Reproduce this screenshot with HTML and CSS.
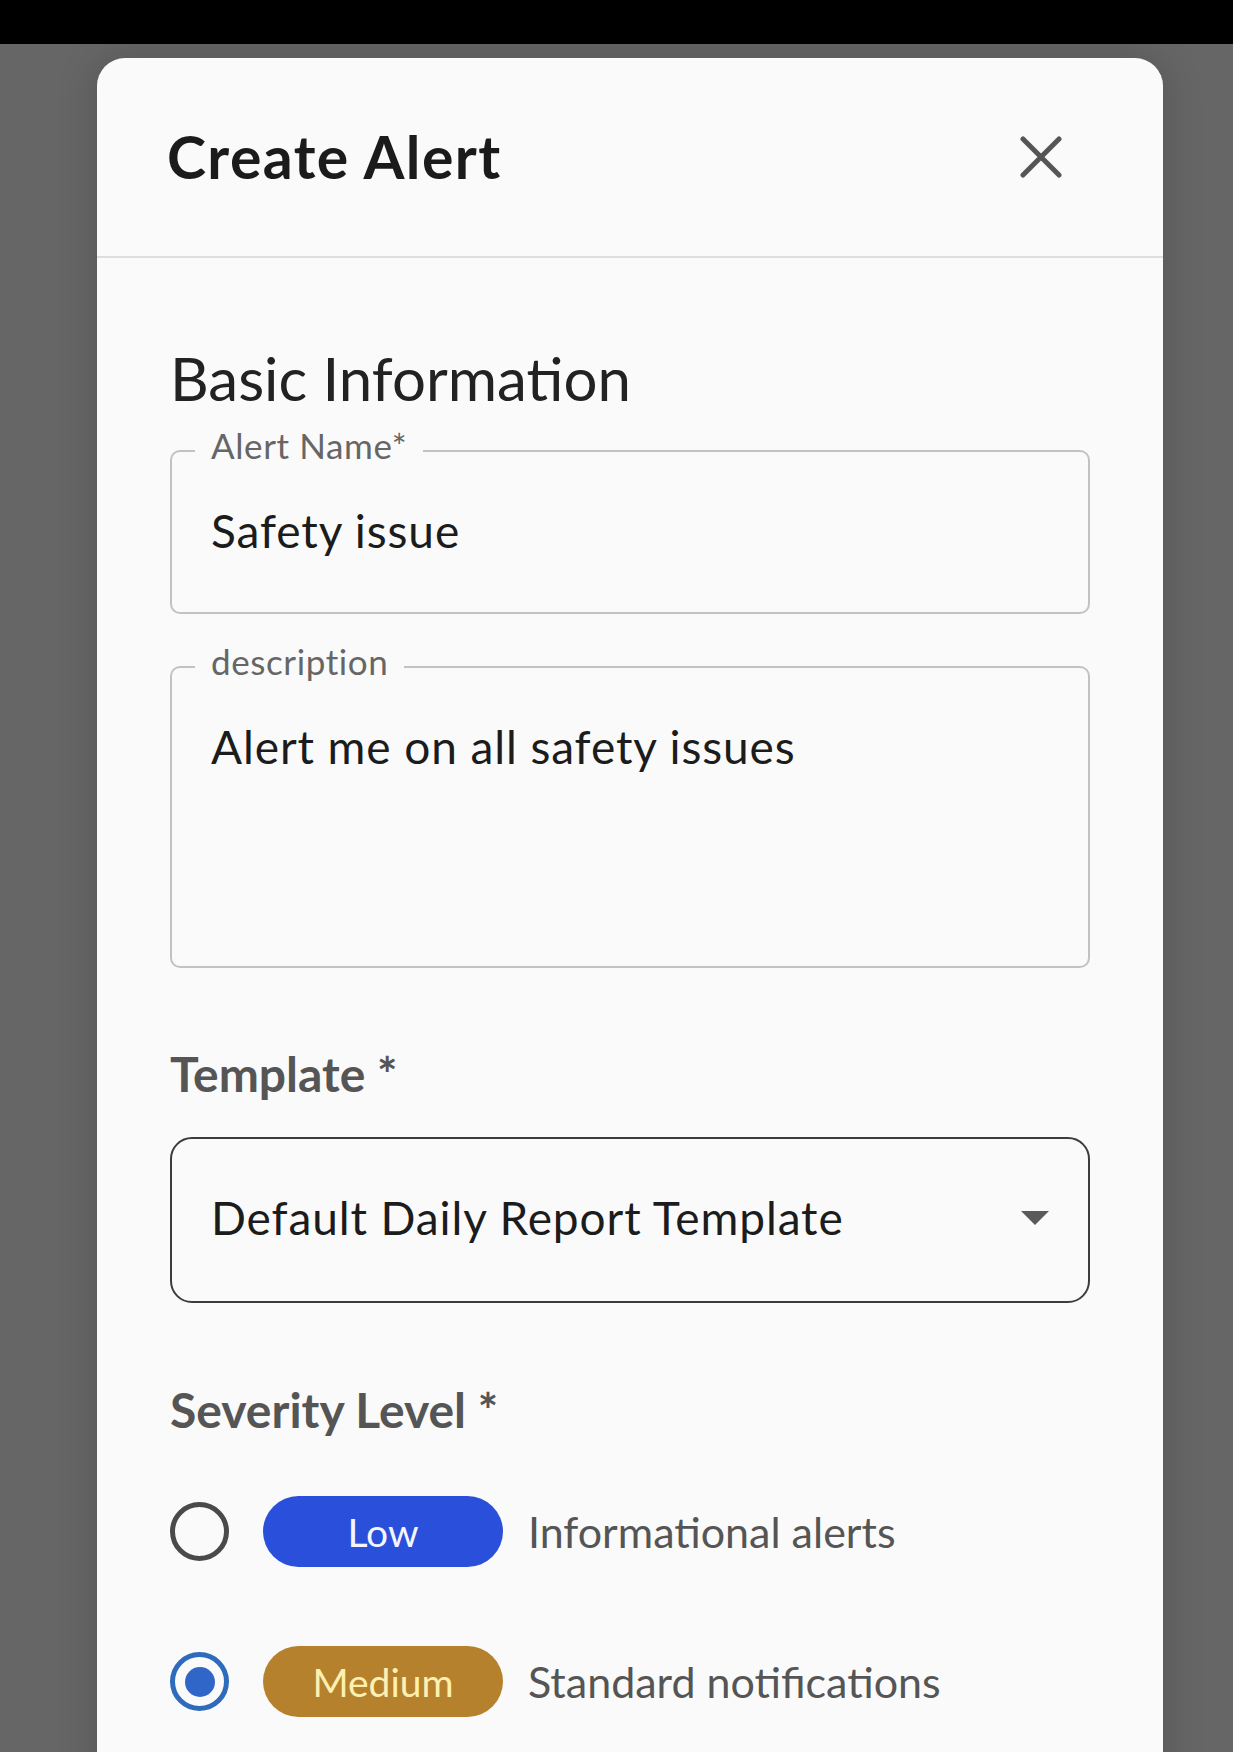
FILE: index.html
```html
<!DOCTYPE html>
<html lang="en">
<head>
    <meta charset="UTF-8">
    <meta name="viewport" content="width=device-width, initial-scale=1.0">
    <title>Create Alert</title>

    <link rel="stylesheet" href="styles.css">
</head>
<body>
    <div class="status-bar"></div>

    <div class="backdrop">
        <div class="dialog">
            <header class="dialog-header">
                <h1>Create Alert</h1>
                <button type="button" class="close-btn" aria-label="Close">
                    <svg width="42" height="42" viewBox="0 0 42 42">
                        <path d="M3 3 L39 39 M39 3 L3 39" />
                    </svg>
                </button>
            </header>

            <form class="dialog-body">
                <h2 class="section-title">Basic Information</h2>

                <fieldset class="field">
                    <legend>Alert Name*</legend>
                    <input type="text" id="alert-name" value="Safety issue">
                </fieldset>

                <fieldset class="field">
                    <legend>description</legend>
                    <textarea id="description">Alert me on all safety issues</textarea>
                </fieldset>

                <div class="group-label">Template *</div>
                <div class="select">
                    <span>Default Daily Report Template</span>
                    <svg width="28" height="14" viewBox="0 0 28 14">
                        <path d="M0 0 H28 L14 14 Z" />
                    </svg>
                </div>

                <div class="group-label">Severity Level *</div>
                <div class="severity-list">
                    <label class="severity-option">
                        <input type="radio" name="severity" value="low">
                        <span class="radio"></span>
                        <span class="pill pill-low">Low</span>
                        <span class="severity-desc">Informational alerts</span>
                    </label>
                    <label class="severity-option">
                        <input type="radio" name="severity" value="medium" checked>
                        <span class="radio"></span>
                        <span class="pill pill-medium">Medium</span>
                        <span class="severity-desc">Standard notifications</span>
                    </label>
                </div>
            </form>
        </div>
    </div>
</body>
</html>
```

FILE: styles.css
```css
/* Create Alert dialog over a dimmed screen */
* {
    box-sizing: border-box;
}

body {
    margin: 0;
    height: 1752px;
    overflow: hidden;
    background: #666;
    font-family: 'Lato', 'Noto Sans', sans-serif;
    color: #1c1c1c;
}

.status-bar {
    height: 44px;
    background: #000;
}

.backdrop {
    padding-top: 14px;
    padding-left: 97px;
}

.dialog {
    width: 1066px;
    min-height: 1800px;
    background: #fafafa;
    border-radius: 28px 28px 0 0;
    box-shadow: 0 0 40px rgba(0, 0, 0, 0.18);
}

/* Header */
.dialog-header {
    height: 200px;
    display: flex;
    align-items: center;
    justify-content: space-between;
    padding: 0 101px 0 70px;
    border-bottom: 2px solid #dedede;
}

.dialog-header h1 {
    margin: 0;
    font-size: 59px;
    font-weight: 700;
    line-height: 1.2;
    letter-spacing: 1.4px;
    color: #1b1b1b;
}

.close-btn {
    border: none;
    background: none;
    padding: 0;
    width: 42px;
    height: 42px;
    cursor: pointer;
}

.close-btn svg {
    display: block;
    stroke: #555;
    stroke-width: 5;
    stroke-linecap: round;
    fill: none;
}

/* Body */
.dialog-body {
    padding: 84px 73px 0;
}

.section-title {
    margin: 0;
    font-size: 60px;
    font-weight: 400;
    line-height: 1.2;
    color: #222;
}

/* Outlined text fields */
.field {
    margin: 10px 0 0;
    padding: 0;
    border: 2px solid #c2c2c2;
    border-radius: 10px;
}

.field + .field {
    margin-top: 26px;
}

.field legend {
    margin-left: 23px;
    padding: 0 16px 11px;
    font-size: 35px;
    line-height: 1.2;
    letter-spacing: 0.6px;
    color: #666;
}

.field input,
.field textarea {
    display: block;
    width: 100%;
    border: none;
    background: transparent;
    font-family: inherit;
    font-size: 46px;
    line-height: 1.2;
    letter-spacing: 0.9px;
    color: #1c1c1c;
    outline: none;
}

.field input {
    height: 135px;
    padding: 26px 39px 54px;
}

.field textarea {
    height: 273px;
    padding: 26px 39px 0;
    resize: none;
}

/* Group labels */
.group-label {
    margin-top: 77px;
    font-size: 48px;
    font-weight: 700;
    line-height: 1.2;
    color: #555;
}

/* Select */
.select {
    margin-top: 34px;
    height: 166px;
    display: flex;
    align-items: center;
    justify-content: space-between;
    padding: 0 39px 4px;
    border: 2px solid #3c3c3c;
    border-radius: 22px;
    font-size: 46px;
    letter-spacing: 0.9px;
    color: #1c1c1c;
}

.select svg {
    fill: #5a5a5a;
}

.select + .group-label {
    margin-top: 78px;
}

/* Severity radio list */
.severity-list {
    margin-top: 58px;
    display: flex;
    flex-direction: column;
    gap: 79px;
}

.severity-option {
    display: flex;
    align-items: center;
    cursor: pointer;
}

.severity-option input {
    display: none;
}

.radio {
    width: 59px;
    height: 59px;
    border: 5px solid #4a4a4a;
    border-radius: 50%;
    display: flex;
    align-items: center;
    justify-content: center;
    flex-shrink: 0;
}

.severity-option input:checked + .radio {
    border-color: #2f6bbd;
}

.severity-option input:checked + .radio::after {
    content: "";
    width: 30px;
    height: 30px;
    border-radius: 50%;
    background: #2f66c8;
}

.pill {
    margin-left: 34px;
    width: 240px;
    height: 71px;
    border-radius: 36px;
    display: flex;
    align-items: center;
    justify-content: center;
    font-size: 39px;
}

.pill-low {
    background: #2a4fdb;
    color: #f4f6ff;
}

.pill-medium {
    background: #b6812c;
    color: #fdf0b3;
}

.severity-desc {
    margin-left: 25px;
    font-size: 43px;
    color: #555;
}
```
